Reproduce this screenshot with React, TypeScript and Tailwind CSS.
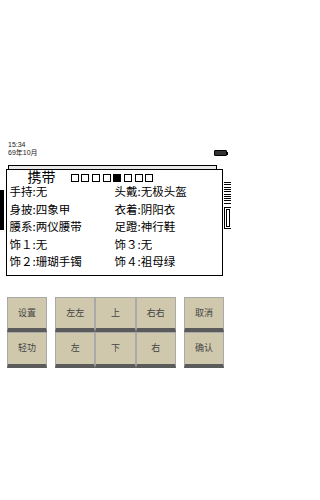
import React from 'react'

const leftItems = ['手持:无', '身披:四象甲', '腰系:两仪腰带', '饰１:无', '饰２:珊瑚手镯']
const rightItems = ['头戴:无极头盔', '衣着:阴阳衣', '足蹬:神行鞋', '饰３:无', '饰４:祖母绿']

function Battery() {
  return (
    <div className="flex items-center">
      <div className="w-[13px] h-[6px] border border-black rounded-[1px] bg-[#333]" />
      <div className="w-[1px] h-[3px] bg-black" />
    </div>
  )
}

function Btn({ label }: { label: string }) {
  return (
    <div className="flex-1 h-[35.5px] bg-[#cfc8ad] border-x border-t border-[#a9a9a9] border-b-[4px] border-b-[#5b5b5b] flex items-center justify-center text-[9px] leading-[10px] text-[#444]">
      {label}
    </div>
  )
}

export default function App() {
  const slots = [0, 0, 0, 0, 1, 0, 0, 0]

  return (
    <div className="w-[231px] min-h-[500px] bg-white font-['Noto_Sans_CJK_SC',sans-serif] text-black">
      {/* status */}
      <div className="pt-[141px] pl-[8px] pr-[3px] text-[7px] leading-[8px] text-[#222] font-['Liberation_Sans','Noto_Sans_CJK_SC',sans-serif]">
        <div>15:34</div>
        <div className="flex items-center justify-between">
          <span>69年10月</span>
          <Battery />
        </div>
      </div>

      {/* top strip */}
      <div className="mt-[8px] ml-[8px] w-[209px] h-[4px] border border-b-0 border-black bg-[#e8e8e8]" />

      {/* main panel */}
      <div className="relative">
        <div className="absolute left-0 top-[21px] w-[4px] h-[40px] bg-black" />
        <div className="absolute left-[224px] top-[13px] w-[7px] h-[23px] bg-[repeating-linear-gradient(to_bottom,#000_0px,#000_1px,#fff_1px,#fff_2.3px)]" />
        <div className="absolute left-[224px] top-[38px] w-[7px] h-[22px] border-l-[1.5px] border-y border-black p-[1px] bg-white">
          <div className="w-full h-full border border-black" />
        </div>

        <div className="ml-[6px] w-[217px] border-[1.5px] border-black pl-[2.5px] pb-[4px]">
          <div className="flex items-center h-[13px] pl-[18px]">
            <span className="text-[14px] leading-[13px]">携带</span>
            <div className="flex gap-[2.7px] ml-[15px] mt-[2px]">
              {slots.map((s, i) => (
                <div
                  key={i}
                  className={`w-[8px] h-[8px] border-[1.5px] border-black ${s ? 'bg-black' : 'bg-white'}`}
                />
              ))}
            </div>
          </div>
          <div className="grid grid-cols-[105px_1fr] text-[11.5px] leading-[17.5px]">
            {leftItems.map((l, i) => (
              <React.Fragment key={i}>
                <div className="whitespace-nowrap">{l}</div>
                <div className="whitespace-nowrap">{rightItems[i]}</div>
              </React.Fragment>
            ))}
          </div>
        </div>
      </div>

      {/* buttons */}
      <div className="mt-[21px] flex pl-[7px] gap-[8px]">
        <div className="w-[40px] flex flex-col">
          <Btn label="设置" />
          <Btn label="轻功" />
        </div>
        <div className="w-[121px] flex flex-col">
          <div className="flex">
            <Btn label="左左" />
            <Btn label="上" />
            <Btn label="右右" />
          </div>
          <div className="flex">
            <Btn label="左" />
            <Btn label="下" />
            <Btn label="右" />
          </div>
        </div>
        <div className="w-[40px] flex flex-col">
          <Btn label="取消" />
          <Btn label="确认" />
        </div>
      </div>
    </div>
  )
}
